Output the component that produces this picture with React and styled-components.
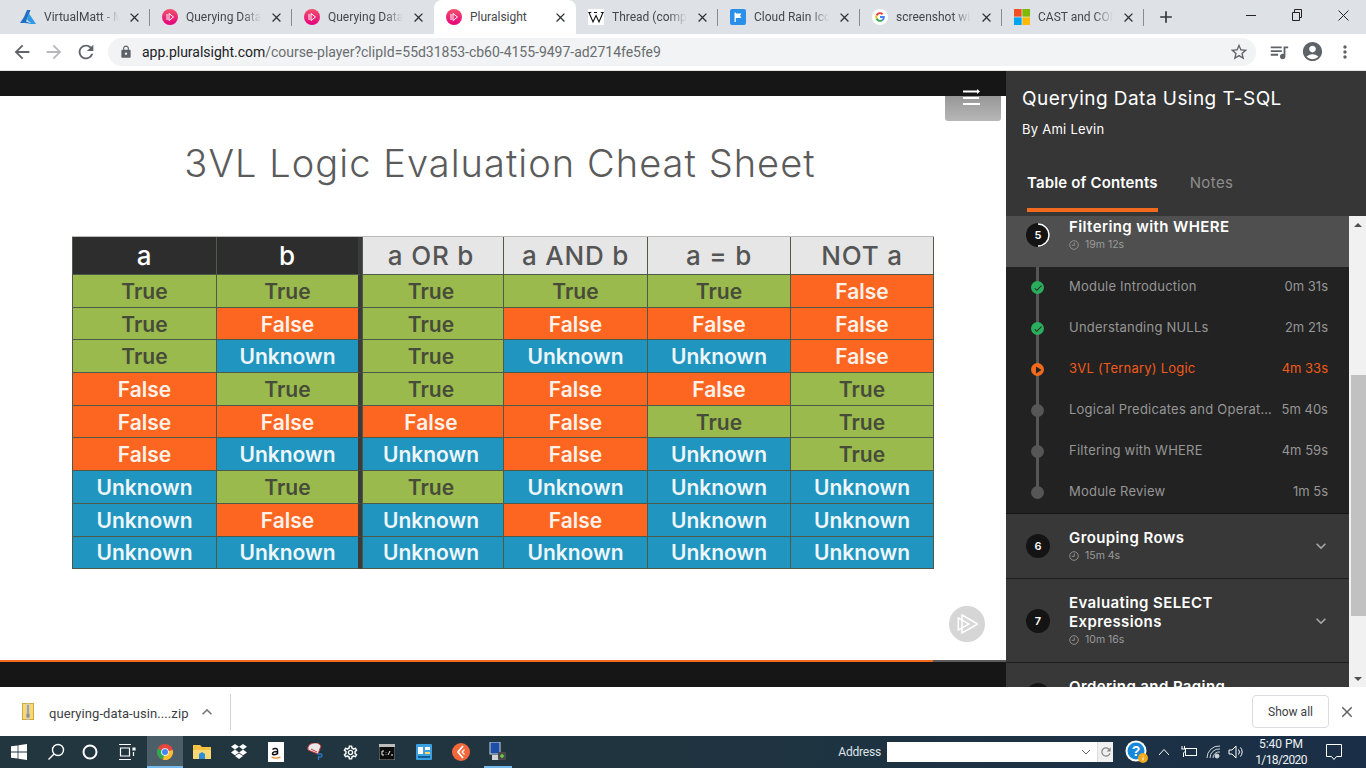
import React from "react";
import styled, { createGlobalStyle } from "styled-components";
import {
  MdArrowBack,
  MdArrowForward,
  MdRefresh,
  MdLock,
  MdStarBorder,
  MdQueueMusic,
  MdAccountCircle,
  MdMoreVert,
  MdClose,
  MdAdd,
  MdExpandMore,
  MdExpandLess,
  MdCheck,
  MdPlayArrow,
  MdOutlineSettings,
} from "react-icons/md";

const GlobalStyle = createGlobalStyle`
  html, body {
    margin: 0;
    padding: 0;
    background: #fff;
    overflow: hidden;
  }
  * { box-sizing: border-box; }
`;

const Screen = styled.div`
  width: 1366px;
  height: 768px;
  display: flex;
  flex-direction: column;
  overflow: hidden;
  font-family: Roboto, "Liberation Sans", sans-serif;
`;

/* browser chrome */
const TabStrip = styled.div`
  height: 34px;
  flex: none;
  display: flex;
  background: #dee1e6;
  padding-left: 8px;
`;

const Tab = styled.div`
  position: relative;
  width: 142px;
  height: 34px;
  flex: none;
  display: flex;
  align-items: center;
  gap: 8px;
  padding: 0 8px 0 12px;
  background: ${(p) => (p.$active ? "#fff" : "transparent")};
  border-radius: 8px 8px 0 0;
  &::after {
    content: "";
    position: absolute;
    right: 0;
    top: 9px;
    height: 17px;
    width: 1px;
    background: ${(p) => (p.$noSep ? "transparent" : "#888b90")};
  }
`;

const TabTitle = styled.span`
  flex: 1;
  min-width: 0;
  overflow: hidden;
  white-space: nowrap;
  font-size: 12px;
  color: #45474a;
  -webkit-mask-image: ${(p) =>
    p.$fade ? "linear-gradient(to right, #000 75%, transparent 100%)" : "none"};
`;

const TabClose = styled(MdClose)`
  flex: none;
  width: 15px;
  height: 15px;
  color: #2f3235;
`;

const NewTab = styled(MdAdd)`
  width: 20px;
  height: 20px;
  margin: 7px 0 0 12px;
  color: #35373a;
`;

const WindowButtons = styled.div`
  margin-left: auto;
  display: flex;
`;

const WindowButton = styled.div`
  width: 46px;
  height: 30px;
  display: flex;
  align-items: center;
  justify-content: center;
  color: #222;
`;

const Toolbar = styled.div`
  height: 37px;
  flex: none;
  display: flex;
  align-items: center;
  background: #fff;
  padding: 0 0 1px 0;
  border-bottom: 1px solid #e4e4e4;
`;

const NavButton = styled.div`
  width: 32px;
  flex: none;
  display: flex;
  justify-content: center;
  color: ${(p) => (p.$off ? "#b6b8bb" : "#5f6368")};
  font-size: 22px;
`;

const NavGroup = styled.div`
  display: flex;
  padding-left: 6px;
  width: 108px;
  flex: none;
`;

const Omnibox = styled.div`
  width: 1148px;
  height: 28px;
  flex: none;
  display: flex;
  align-items: center;
  background: #f1f3f4;
  border-radius: 14px;
  padding: 0 7px 0 11px;
  color: #5f6368;
  font-size: 14px;
`;

const Url = styled.span`
  margin-left: 9px;
  flex: 1;
  letter-spacing: -0.02px;
  color: #6a6d70;
  b {
    font-weight: 400;
    color: #202124;
  }
`;

const ToolIcons = styled.div`
  flex: 1;
  display: flex;
  align-items: center;
  gap: 11px;
  padding-left: 12px;
  color: #5f6368;
`;

/* page body */
const Page = styled.div`
  flex: 1;
  min-height: 0;
  display: flex;
`;

const Player = styled.div`
  position: relative;
  width: 1006px;
  flex: none;
  display: flex;
  flex-direction: column;
  background: #161616;
`;

const Slide = styled.div`
  margin-top: 25px;
  height: 564px;
  flex: none;
  display: flex;
  flex-direction: column;
  background: #fff;
`;

const SlideTitle = styled.h1`
  margin: 45px 0 51px;
  height: 44px;
  line-height: 44px;
  width: 1000px;
  text-align: center;
  font-family: Inter, sans-serif;
  font-weight: 300;
  font-size: 38px;
  letter-spacing: 1.05px;
  color: #5b5b5b;
`;

const Table = styled.div`
  margin-left: 72px;
  width: 862px;
  display: grid;
  grid-template-columns: 144px 146px 141px 144px 143px 144px;
  grid-template-rows: 38px repeat(9, 32.7px);
  border-top: 1px solid #bbb;
`;

const cellColors = {
  T: ["#9bba4d", "#464b3a"],
  F: ["#fd6621", "#fdf2ea"],
  U: ["#1f95bf", "#eef6fa"],
  dark: ["#2d2d2d", "#fff"],
  light: ["#e6e6e6", "#555"],
};

const Cell = styled.div`
  display: flex;
  align-items: center;
  justify-content: center;
  font-family: Inter, sans-serif;
  padding-top: ${(p) => (p.$head ? "0" : "1px")};
  padding-right: ${(p) => (p.$nudge ? "4px" : "0")};
  font-weight: ${(p) => (p.$head ? 500 : 600)};
  font-size: ${(p) => (p.$head ? "26px" : "21px")};
  letter-spacing: ${(p) => (p.$head ? "0.8px" : "0")};
  background: ${(p) => cellColors[p.$kind][0]};
  color: ${(p) => cellColors[p.$kind][1]};
  border-left: 1px solid #4d5a48;
  border-bottom: 1px solid #4d5a48;
  border-right: ${(p) => (p.$split ? "4px solid #3b3b3b" : p.$last ? "1px solid #4d5a48" : "0")};
`;

const MenuButton = styled.div`
  position: absolute;
  left: 945px;
  top: 25px;
  width: 56px;
  height: 25px;
  border-radius: 0 0 3px 3px;
  background: linear-gradient(#979797, #b7b7b7);
`;

const MenuGlyph = styled.svg`
  position: absolute;
  left: 16px;
  top: -7px;
`;

const LogoBadge = styled.div`
  position: absolute;
  left: 949px;
  top: 535px;
  width: 36px;
  height: 36px;
  border-radius: 50%;
  background: #d6d6d6;
  display: flex;
  align-items: center;
  justify-content: center;
`;

const Progress = styled.div`
  height: 2px;
  flex: none;
  background: #5c5c5c;
  div {
    height: 2px;
    background: #f26a21;
  }
`;

/* course sidebar */
const Sidebar = styled.aside`
  flex: 1;
  min-width: 0;
  display: flex;
  flex-direction: column;
  background: #363636;
  font-family: Inter, sans-serif;
`;

const CourseHead = styled.div`
  height: 145px;
  flex: none;
  padding: 17px 0 0 16px;
  color: #fff;
`;

const CourseTitle = styled.div`
  font-size: 19px;
  line-height: 22px;
  letter-spacing: 0.45px;
  font-weight: 400;
`;

const Author = styled.div`
  margin-top: 10px;
  font-size: 13px;
  line-height: 18px;
  letter-spacing: 0.25px;
`;

const Tabs = styled.div`
  display: flex;
  gap: 32px;
  margin: 25px 0 0 5px;
`;

const SideTab = styled.div`
  height: 49px;
  padding-top: 11px;
  font-size: 15px;
  line-height: 18px;
  letter-spacing: ${(p) => (p.$active ? "0.15px" : "0.4px")};
  font-weight: ${(p) => (p.$active ? 600 : 400)};
  color: ${(p) => (p.$active ? "#fff" : "#8d8d8d")};
  border-bottom: 4px solid ${(p) => (p.$active ? "#f26a1d" : "transparent")};
`;

const ListArea = styled.div`
  flex: 1;
  min-height: 0;
  display: flex;
  overflow: hidden;
`;

const Contents = styled.div`
  width: 343px;
  flex: none;
  overflow: hidden;
`;

const ContentsInner = styled.div`
  margin-top: -13px;
`;

const Section = styled.div`
  display: flex;
  align-items: center;
  height: ${(p) => p.$h}px;
  padding-left: 20px;
  background: ${(p) => (p.$open ? "#4f4f4f" : "#383838")};
  border-bottom: ${(p) => (p.$open ? "0" : "1px solid #1d1d1d")};
`;

const SectionNumber = styled.div`
  position: relative;
  width: 24px;
  height: 24px;
  flex: none;
  border-radius: 50%;
  background: #141414;
  color: #fff;
  font-size: 11px;
  font-weight: 600;
  display: flex;
  align-items: center;
  justify-content: center;
`;

const RingSvg = styled.svg`
  position: absolute;
  left: 0;
  top: 0;
`;

const SectionBody = styled.div`
  margin-left: 19px;
  padding-bottom: 1px;
  flex: 1;
  min-width: 0;
`;

const SectionTitle = styled.div`
  font-size: 15px;
  line-height: 19px;
  letter-spacing: 0.4px;
  font-weight: 600;
  color: #fff;
`;

const SectionMeta = styled.div`
  margin-top: 2px;
  display: flex;
  align-items: center;
  gap: 6px;
  font-size: 10.5px;
  line-height: 14px;
  color: #9b9b9b;
`;

const Chevron = styled(MdExpandMore)`
  flex: none;
  width: 20px;
  height: 20px;
  margin-right: 18px;
  color: #a5a5a5;
`;

const Lessons = styled.div`
  background: #222;
  border-bottom: 1px solid #161616;
  height: 247px;
`;

const Lesson = styled.div`
  position: relative;
  height: 41px;
  display: flex;
  align-items: center;
  padding: 0 21px 3px 63px;
  font-size: 13px;
  color: ${(p) => (p.$current ? "#f05a1a" : "#969696")};
  &::before {
    content: "";
    position: absolute;
    left: 30px;
    width: 3px;
    top: 0;
    bottom: ${(p) => (p.$final ? "50%" : "0")};
    background: #565656;
  }
`;

const LessonDot = styled.div`
  position: absolute;
  left: 25px;
  top: 14px;
  width: 13px;
  height: 13px;
  border-radius: 50%;
  background: ${(p) => p.$color};
  color: #222;
  display: flex;
  align-items: center;
  justify-content: center;
`;

const LessonName = styled.span`
  flex: 1;
  min-width: 0;
  overflow: hidden;
  white-space: nowrap;
  text-overflow: ellipsis;
  letter-spacing: 0.22px;
`;

const LessonTime = styled.span`
  flex: none;
  margin-left: 8px;
`;

const Scrollbar = styled.div`
  flex: 1;
  display: flex;
  flex-direction: column;
  background: #f1f1f1;
`;

const ScrollArrow = styled.div`
  height: 17px;
  flex: none;
  display: flex;
  align-items: center;
  justify-content: center;
  &::before {
    content: "";
    border-left: 4px solid transparent;
    border-right: 4px solid transparent;
    ${(p) => (p.$up ? "border-bottom: 4px solid #505050;" : "border-top: 4px solid #505050;")}
  }
`;

const ScrollTrack = styled.div`
  flex: 1;
  padding: 142px 0 54px 2px;
  display: flex;
`;

const ScrollThumb = styled.div`
  flex: 1;
  background: #c1c1c1;
`;

/* downloads shelf */
const Shelf = styled.div`
  height: 49px;
  flex: none;
  display: flex;
  align-items: center;
  background: #fff;
  color: #3c4043;
  padding-left: 22px;
`;

const ShelfFile = styled.span`
  margin: 4px 0 0 15px;
  font-size: 13px;
  letter-spacing: 0.08px;
  color: #3c4043;
  width: 139px;
  white-space: nowrap;
`;

const ShelfChevron = styled(MdExpandLess)`
  margin-left: 9px;
  width: 20px;
  height: 20px;
  color: #777;
`;

const ShelfRule = styled.div`
  width: 1px;
  height: 36px;
  margin-left: 13px;
  background: #d0d0d0;
`;

const ShowAll = styled.div`
  margin-left: auto;
  width: 77px;
  height: 33px;
  border: 1px solid #dadce0;
  border-radius: 4px;
  display: flex;
  align-items: center;
  justify-content: center;
  font-size: 12px;
  color: #3c4043;
`;

const ShelfClose = styled(MdClose)`
  width: 18px;
  height: 18px;
  margin: 0 10px 0 9px;
  color: #5f6368;
`;

/* windows taskbar */
const Taskbar = styled.div`
  height: 32px;
  flex: none;
  display: flex;
  align-items: center;
  background: linear-gradient(90deg, #22363f, #1f3440 55%, #1a2f47);
`;

const TaskItem = styled.div`
  position: relative;
  width: ${(p) => p.$w || 37}px;
  height: 32px;
  flex: none;
  display: flex;
  align-items: center;
  justify-content: center;
  background: ${(p) => (p.$focus ? "#4c5f68" : "transparent")};
  ${(p) =>
    p.$running
      ? `&::after {
    content: "";
    position: absolute;
    left: ${p.$focus ? 0 : 2}px;
    right: ${p.$focus ? 0 : 2}px;
    bottom: 0;
    height: 2px;
    background: #76b9ed;
  }`
      : ""}
`;

const AddressLabel = styled.span`
  margin-left: auto;
  font-size: 12px;
  letter-spacing: -0.2px;
  color: #dfe4e7;
`;

const AddressBox = styled.div`
  margin-left: 6px;
  width: 226px;
  height: 20px;
  flex: none;
  display: flex;
  align-items: center;
  justify-content: flex-end;
  background: #fff;
  color: #666;
`;

const AddressCaret = styled.svg`
  margin-right: 6px;
`;

const AddressGo = styled.div`
  width: 16px;
  height: 20px;
  display: flex;
  align-items: center;
  justify-content: center;
  background: #f0f0f0;
  border-left: 1px solid #ddd;
`;

const Tray = styled.div`
  display: flex;
  align-items: center;
  margin-left: 10px;
  color: #fff;
`;

const TrayIcon = styled.div`
  width: ${(p) => p.$w || 24}px;
  display: flex;
  justify-content: center;
`;

const Clock = styled.div`
  width: 72px;
  text-align: center;
  font-size: 12px;
  line-height: 16px;
  color: #eef1f3;
`;

const ClockDate = styled.div`
  letter-spacing: -0.6px;
`;

const Notify = styled.div`
  width: 33px;
  margin-right: 16px;
  display: flex;
  justify-content: center;
`;

function PluralIcon() {
  return (
    <svg width="16" height="16" viewBox="0 0 16 16">
      <defs>
        <linearGradient id="psg" x1="0" y1="0" x2="0" y2="1">
          <stop offset="0" stopColor="#f0526a" />
          <stop offset="1" stopColor="#e6007e" />
        </linearGradient>
      </defs>
      <circle cx="8" cy="8" r="8" fill="url(#psg)" />
      <path d="M5 5v6M7 4.5v7l4.5-3.5z" fill="none" stroke="#fff" strokeWidth="1" />
    </svg>
  );
}

function AzureIcon() {
  return (
    <svg width="16" height="16" viewBox="0 0 16 16">
      <path d="M7 1h3.5L6 12.5l4 1.5H0L4 8z" fill="#1f6fc4" />
      <path d="M9 4.5L16 15H5l6-1-4-3z" fill="#2d9ae6" />
    </svg>
  );
}

function WikiIcon() {
  return (
    <svg width="16" height="16" viewBox="0 0 16 16">
      <rect width="16" height="16" fill="#fff" />
      <path d="M1 3.5l4 9.5 3-6.5 3 6.5 4-9.5M.3 3.5h3M6 3.5h3M12.8 3.5h3" fill="none" stroke="#111" strokeWidth="1.1" />
    </svg>
  );
}

function FlagIcon() {
  return (
    <svg width="16" height="16" viewBox="0 0 16 16">
      <rect width="16" height="16" rx="2" fill="#2a8fe8" />
      <path d="M4.5 3.5h1.3v1h5.7l-1.5 2.3 1.5 2.3H5.8v4H4.5z" fill="#fff" />
    </svg>
  );
}

function GoogleIcon() {
  return (
    <svg width="16" height="16" viewBox="0 0 16 16">
      <circle cx="8" cy="8" r="8" fill="#fff" />
      <path d="M8 5.1c.8 0 1.4.3 1.9.8l1.4-1.4A4.8 4.8 0 0 0 3.8 5.8l1.6 1.3A2.9 2.9 0 0 1 8 5.1z" fill="#ea4335" />
      <path d="M5.2 8c0-.3 0-.6.2-.9L3.8 5.8a4.8 4.8 0 0 0 0 4.4l1.6-1.3c-.2-.3-.2-.6-.2-.9z" fill="#fbbc05" />
      <path d="M8 10.9c-1.2 0-2.2-.8-2.6-1.9l-1.6 1.3A4.8 4.8 0 0 0 11.2 11.6l-1.5-1.2c-.4.3-1 .5-1.7.5z" fill="#34a853" />
      <path d="M12.7 7.1H8V9h2.7c-.1.6-.5 1.1-1 1.4l1.5 1.2c.9-.8 1.6-2 1.6-3.6 0-.3 0-.6-.1-.9z" fill="#4285f4" />
    </svg>
  );
}

function MicrosoftIcon() {
  return (
    <svg width="16" height="16" viewBox="0 0 16 16">
      <rect width="7.6" height="7.6" fill="#f25022" />
      <rect x="8.4" width="7.6" height="7.6" fill="#7fba00" />
      <rect y="8.4" width="7.6" height="7.6" fill="#00a4ef" />
      <rect x="8.4" y="8.4" width="7.6" height="7.6" fill="#ffb900" />
    </svg>
  );
}

function ZipIcon() {
  return (
    <svg width="12" height="17" viewBox="0 0 12 17">
      <rect x="0.5" y="0.5" width="11" height="16" fill="#f6d976" stroke="#cfa93c" />
      <rect x="4.5" y="0.5" width="3" height="16" fill="#c9cbd0" />
      <path d="M5 3h2M5 5h2M5 7h2M5 9h2" stroke="#777" />
      <rect x="4.5" y="10.5" width="3" height="4" fill="#8a8a8a" />
    </svg>
  );
}

function ClockGlyph() {
  return (
    <svg width="10" height="10" viewBox="0 0 10 10" fill="none" stroke="#8f8f8f" strokeWidth="1">
      <circle cx="5" cy="5" r="4.3" />
      <path d="M5.3 2.5v2.8H2.8" />
    </svg>
  );
}

const tabs = [
  { title: "VirtualMatt - Micro", icon: <AzureIcon /> },
  { title: "Querying Data Using", icon: <PluralIcon /> },
  { title: "Querying Data Using", icon: <PluralIcon /> },
  { title: "Pluralsight", icon: <PluralIcon />, active: true },
  { title: "Thread (computing)", icon: <WikiIcon /> },
  { title: "Cloud Rain Icon", icon: <FlagIcon /> },
  { title: "screenshot windows", icon: <GoogleIcon /> },
  { title: "CAST and CONVERT", icon: <MicrosoftIcon /> },
];

const columns = [
  { label: "a", kind: "dark" },
  { label: "b", kind: "dark", split: true },
  { label: "a OR b", kind: "light", nudge: true },
  { label: "a AND b", kind: "light" },
  { label: "a = b", kind: "light" },
  { label: "NOT a", kind: "light", last: true },
];

const rows = [
  "TTTTTF",
  "TFTFFF",
  "TUTUUF",
  "FTTFFT",
  "FFFFTT",
  "FUUFUT",
  "UTTUUU",
  "UFUFUU",
  "UUUUUU",
];

const words = { T: "True", F: "False", U: "Unknown" };

const lessons = [
  { name: "Module Introduction", time: "0m 31s", state: "done" },
  { name: "Understanding NULLs", time: "2m 21s", state: "done" },
  { name: "3VL (Ternary) Logic", time: "4m 33s", state: "current" },
  { name: "Logical Predicates and Operators", time: "5m 40s" },
  { name: "Filtering with WHERE", time: "4m 59s" },
  { name: "Module Review", time: "1m 5s" },
];

function LessonRow({ lesson, index }) {
  const current = lesson.state === "current";
  const color = lesson.state === "done" ? "#2aae5d" : current ? "#f26a1d" : "#565656";
  return (
    <Lesson $current={current} $final={index === lessons.length - 1}>
      <LessonDot $color={color}>
        {lesson.state === "done" && <MdCheck size={10} />}
        {current && <MdPlayArrow size={12} />}
      </LessonDot>
      <LessonName>{lesson.name}</LessonName>
      <LessonTime>{lesson.time}</LessonTime>
    </Lesson>
  );
}

function SectionRow({ num, title, time, h, open }) {
  return (
    <Section $h={h} $open={open}>
      <SectionNumber>
        {num}
        {open && (
          <RingSvg width="24" height="24" viewBox="0 0 24 24" fill="none">
            <path d="M12 1a11 11 0 0 1 0 22" stroke="#fff" strokeWidth="1.5" />
          </RingSvg>
        )}
      </SectionNumber>
      <SectionBody>
        <SectionTitle>{title}</SectionTitle>
        <SectionMeta>
          <ClockGlyph />
          {time}
        </SectionMeta>
      </SectionBody>
      {!open && <Chevron />}
    </Section>
  );
}

function Sheet() {
  return (
    <Table>
      {columns.map((c) => (
        <Cell key={c.label} $head $kind={c.kind} $split={c.split} $last={c.last} $nudge={c.nudge}>
          {c.label}
        </Cell>
      ))}
      {rows.map((row, r) =>
        row.split("").map((k, i) => (
          <Cell key={r + "-" + i} $kind={k} $split={i === 1} $last={i === 5} $nudge={i === 2}>
            {words[k]}
          </Cell>
        ))
      )}
    </Table>
  );
}

function TaskIcons() {
  return (
    <>
      <TaskItem>
        <svg width="16" height="16" viewBox="0 0 16 16" fill="#fff">
          <path d="M0 2.3l6.6-.9v6.2H0zM7.4 1.3L16 0v7.6H7.4zM0 8.4h6.6v6.2L0 13.7zM7.4 8.4H16V16l-8.600-1.300z" />
        </svg>
      </TaskItem>
      <TaskItem>
        <svg width="18" height="18" viewBox="0 0 18 18" fill="none" stroke="#fff" strokeWidth="1.4">
          <circle cx="11" cy="7" r="5.5" />
          <path d="M7 11l-5.5 5.5" />
        </svg>
      </TaskItem>
      <TaskItem $w={32}>
        <svg width="16" height="16" viewBox="0 0 16 16" fill="none" stroke="#fff" strokeWidth="2">
          <circle cx="8" cy="8" r="6.5" />
        </svg>
      </TaskItem>
      <TaskItem $w={41}>
        <svg width="18" height="18" viewBox="0 0 18 18" fill="none" stroke="#fff" strokeWidth="1.2">
          <path d="M1 1.5h12M1 16.5h12M2.5 5h9v8h-9z" />
          <path d="M15 5h2v2h-2z" fill="#fff" />
          <path d="M15.5 9v4" />
        </svg>
      </TaskItem>
      <TaskItem $w={36} $focus $running>
        <svg width="16" height="16" viewBox="0 0 16 16">
          <circle cx="8" cy="8" r="8" fill="#e8453c" />
          <path d="M8 8L1 4.2A8 8 0 0 0 6 15.8z" fill="#2fa84f" />
          <path d="M8 8l7.7-2.1A8 8 0 0 1 6 15.8z" fill="#fbc02d" />
          <circle cx="8" cy="8" r="3.8" fill="#fff" />
          <circle cx="8" cy="8" r="3" fill="#4285f4" />
        </svg>
      </TaskItem>
      <TaskItem>
        <svg width="18" height="16" viewBox="0 0 18 16">
          <path d="M0 1h7l2 2h9v12H0z" fill="#f5c242" />
          <path d="M0 6h18v9H0z" fill="#f9d976" />
          <path d="M6 15v-5l3-2 3 2v5z" fill="#2a8fd8" />
        </svg>
      </TaskItem>
      <TaskItem>
        <svg width="18" height="16" viewBox="0 0 18 16" fill="#fff">
          <path d="M5 0l4 2.8L5 5.600 1 2.800zM13 0l4 2.800-4 2.800-4-2.800zM5 5.600l4 2.800-4 2.800-4-2.800zM13 5.600l4 2.800-4 2.800-4-2.800zM5 12l4-2.500 4 2.500-4 3z" />
        </svg>
      </TaskItem>
      <TaskItem>
        <svg width="16" height="20" viewBox="0 0 16 20">
          <rect width="16" height="20" fill="#fff" />
          <path d="M4.5 7.5c2-1.5 5-1.2 5 .8v4.2M9.5 9.5c-3 0-5 .6-5 2.2 0 1.5 3.5 1.5 5-.5" fill="none" stroke="#111" strokeWidth="1.5" />
          <path d="M3.5 15c3 1.5 6 1.5 9 0" fill="none" stroke="#e98a1c" strokeWidth="1.2" />
        </svg>
      </TaskItem>
      <TaskItem $w={41}>
        <svg width="18" height="18" viewBox="0 0 18 18">
          <path d="M2 7a7 6 0 0 1 13-4l-3 8z" fill="#e9e9e9" stroke="#c8373c" strokeWidth="1" />
          <path d="M5 6l6 3" stroke="#c8373c" />
          <path d="M11 11h3.5a1.5 1.5 0 0 1 0 3H12.500v3" fill="none" stroke="#2a78c2" strokeWidth="1.3" />
        </svg>
      </TaskItem>
      <TaskItem $w={31}>
        <MdOutlineSettings size={17} color="#fff" />
      </TaskItem>
      <TaskItem $w={42}>
        <svg width="16" height="16" viewBox="0 0 16 16">
          <rect width="16" height="16" fill="#0c0c0c" stroke="#999" />
          <rect width="16" height="3" fill="#bdbdbd" />
          <path d="M5 7H3v4h2M7 8v.5M7 10.5v.5M9 11l2-4M12 11h2" fill="none" stroke="#eee" />
        </svg>
      </TaskItem>
      <TaskItem $w={32}>
        <svg width="16" height="16" viewBox="0 0 16 16">
          <rect width="16" height="16" rx="1" fill="#3aa0e0" />
          <rect x="2" y="3" width="5" height="7" fill="#fff" />
          <rect x="9" y="3" width="5" height="3" fill="#fff" />
          <rect x="9" y="8" width="5" height="2" fill="#ffd66b" />
          <rect x="2" y="12" width="12" height="2" fill="#0f5f96" />
        </svg>
      </TaskItem>
      <TaskItem $w={42}>
        <svg width="18" height="18" viewBox="0 0 18 18">
          <circle cx="9" cy="9" r="9" fill="#f3673a" />
          <path d="M11 3L6 9l5 6" fill="none" stroke="#fff" strokeWidth="1.8" />
          <path d="M12.5 6.5L10 9l2.5 2.5" fill="none" stroke="#fff" strokeWidth="1.2" />
        </svg>
      </TaskItem>
      <TaskItem $w={32} $running>
        <svg width="18" height="20" viewBox="0 0 18 20">
          <rect x="1" y="0" width="10" height="12" fill="#1c4fa8" stroke="#cfd3d8" />
          <rect x="3" y="13" width="11" height="5" fill="#cfd3d8" />
          <rect x="9" y="10" width="8" height="8" rx="1" fill="#4a4a4a" />
          <path d="M11 14h4M13 12v4" stroke="#6fd04a" strokeWidth="1.5" />
        </svg>
      </TaskItem>
    </>
  );
}

export default function App() {
  return (
    <Screen>
      <GlobalStyle />
      <TabStrip>
        {tabs.map((t, i) => (
          <Tab key={i} $active={t.active} $noSep={t.active || i === 2}>
            {t.icon}
            <TabTitle $fade={!t.active}>{t.title}</TabTitle>
            <TabClose />
          </Tab>
        ))}
        <NewTab />
        <WindowButtons>
          <WindowButton>
            <svg width="10" height="10" viewBox="0 0 10 10">
              <path d="M0 5.5h10" stroke="#222" />
            </svg>
          </WindowButton>
          <WindowButton>
            <svg width="10" height="12" viewBox="0 0 10 12" fill="none" stroke="#222">
              <path d="M.5 3.5h7v8h-7zM2.5 3.5v-3h7v8h-2" />
            </svg>
          </WindowButton>
          <WindowButton>
            <svg width="11" height="11" viewBox="0 0 11 11">
              <path d="M.5.5l10 10M10.5.5l-10 10" stroke="#222" />
            </svg>
          </WindowButton>
        </WindowButtons>
      </TabStrip>

      <Toolbar>
        <NavGroup>
          <NavButton>
            <MdArrowBack />
          </NavButton>
          <NavButton $off>
            <MdArrowForward />
          </NavButton>
          <NavButton>
            <MdRefresh />
          </NavButton>
        </NavGroup>
        <Omnibox>
          <MdLock size={14} />
          <Url>
            <b>app.pluralsight.com</b>/course-player?clipId=55d31853-cb60-4155-9497-ad2714fe5fe9
          </Url>
          <MdStarBorder size={20} />
        </Omnibox>
        <ToolIcons>
          <MdQueueMusic size={22} />
          <MdAccountCircle size={23} />
          <MdMoreVert size={20} />
        </ToolIcons>
      </Toolbar>

      <Page>
        <Player>
          <Slide>
            <SlideTitle>3VL Logic Evaluation Cheat Sheet</SlideTitle>
            <Sheet />
          </Slide>
          <Progress>
            <div style={{ width: "933px" }} />
          </Progress>
          <MenuButton>
            <MenuGlyph width="20" height="16" viewBox="0 0 20 16" fill="none" stroke="#fff" strokeWidth="2">
              <path d="M2 2.5h14M2 9h16M2 15h17" />
              <path d="M16 0l3 2.5-3 2.5z" fill="#fff" stroke="none" />
            </MenuGlyph>
          </MenuButton>
          <LogoBadge>
            <svg width="22" height="22" viewBox="0 0 22 22" fill="none" stroke="#fff" strokeWidth="1.5">
              <path d="M6 2l15.7 9L6 20z" />
              <path d="M2.3 5L13 11 2.3 17z" />
            </svg>
          </LogoBadge>
        </Player>

        <Sidebar>
          <CourseHead>
            <CourseTitle>Querying Data Using T-SQL</CourseTitle>
            <Author>By Ami Levin</Author>
            <Tabs>
              <SideTab $active>Table of Contents</SideTab>
              <SideTab>Notes</SideTab>
            </Tabs>
          </CourseHead>
          <ListArea>
            <Contents>
              <ContentsInner>
                <SectionRow num={5} title="Filtering with WHERE" time="19m 12s" h={64} open />
                <Lessons>
                  {lessons.map((l, i) => (
                    <LessonRow key={l.name} lesson={l} index={i} />
                  ))}
                </Lessons>
                <SectionRow num={6} title="Grouping Rows" time="15m 4s" h={65} />
                <SectionRow num={7} title={<>Evaluating SELECT<br />Expressions</>} time="10m 16s" h={84} />
                <SectionRow num={8} title="Ordering and Paging" time="12m 40s" h={64} />
              </ContentsInner>
            </Contents>
            <Scrollbar>
              <ScrollArrow $up />
              <ScrollTrack>
                <ScrollThumb />
              </ScrollTrack>
              <ScrollArrow />
            </Scrollbar>
          </ListArea>
        </Sidebar>
      </Page>

      <Shelf>
        <ZipIcon />
        <ShelfFile>querying-data-usin....zip</ShelfFile>
        <ShelfChevron />
        <ShelfRule />
        <ShowAll>Show all</ShowAll>
        <ShelfClose />
      </Shelf>

      <Taskbar>
        <TaskIcons />
        <AddressLabel>Address</AddressLabel>
        <AddressBox>
          <AddressCaret width="10" height="6" viewBox="0 0 10 6" fill="none" stroke="#666">
            <path d="M1 1l4 4 4-4" />
          </AddressCaret>
          <AddressGo>
            <MdRefresh size={14} color="#888" />
          </AddressGo>
        </AddressBox>
        <Tray>
          <TrayIcon $w={28}>
            <svg width="24" height="24" viewBox="0 0 24 24">
              <circle cx="11" cy="11" r="10.5" fill="#fff" />
              <circle cx="11" cy="11" r="8.5" fill="#1687d9" />
              <text x="11" y="16" textAnchor="middle" fontSize="14" fontWeight="700" fontFamily="Liberation Sans" fill="#fff">?</text>
              <circle cx="18" cy="18" r="5" fill="#f0a81c" />
              <path d="M18 15.5v.8M18 17.5v3" stroke="#fff" />
            </svg>
          </TrayIcon>
          <TrayIcon $w={26}>
            <svg width="12" height="8" viewBox="0 0 12 8" fill="none" stroke="#fff">
              <path d="M1 7l5-5.5L11 7" />
            </svg>
          </TrayIcon>
          <TrayIcon $w={24}>
            <svg width="16" height="14" viewBox="0 0 16 14" fill="none" stroke="#fff">
              <rect x="4.5" y="3.5" width="11" height="7" />
              <path d="M1 1v3M3.5 1v3M0.5 4h4v2l-2 2v4" />
            </svg>
          </TrayIcon>
          <TrayIcon $w={26}>
            <svg width="16" height="14" viewBox="0 0 16 14" fill="none" stroke="#cfd6da">
              <path d="M1 13A12 12 0 0 1 14 1M4 13A9 9 0 0 1 14 4M7 13a6 6 0 0 1 7-6" />
              <circle cx="11" cy="11" r="2" fill="#cfd6da" />
            </svg>
          </TrayIcon>
          <TrayIcon $w={18}>
            <svg width="16" height="14" viewBox="0 0 16 14" fill="none" stroke="#fff">
              <path d="M1 5h3l4-4v12l-4-4H1zM10.5 4.5a4 4 0 0 1 0 5M12.5 2.5a7 7 0 0 1 0 9" />
            </svg>
          </TrayIcon>
          <Clock>
            5:40 PM
            <ClockDate>1/18/2020</ClockDate>
          </Clock>
          <Notify>
            <svg width="16" height="16" viewBox="0 0 16 16" fill="none" stroke="#fff">
              <path d="M.5.5h15v12h-5l-2.5 3-2.5-3h-5z" />
            </svg>
          </Notify>
        </Tray>
      </Taskbar>
    </Screen>
  );
}
